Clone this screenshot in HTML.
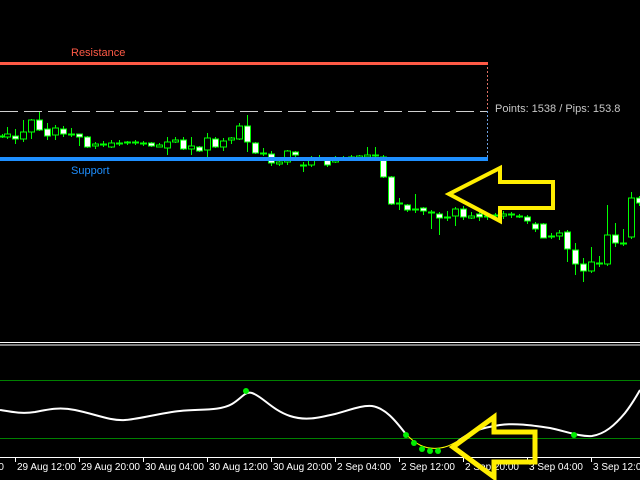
<!DOCTYPE html>
<html><head><style>
html,body{margin:0;padding:0;background:#000;width:640px;height:480px;overflow:hidden}
svg{display:block}
text{font-family:"Liberation Sans",sans-serif}
</style></head><body>
<svg width="640" height="480" viewBox="0 0 640 480" xmlns="http://www.w3.org/2000/svg">
<rect width="640" height="480" fill="#000"/>
<line x1="0" y1="111.5" x2="487" y2="111.5" stroke="#d0d0d0" stroke-width="1" stroke-dasharray="18,6"/>
<line x1="487.5" y1="63" x2="487.5" y2="111" stroke="#e07060" stroke-width="1" stroke-dasharray="2,2"/>
<line x1="487.5" y1="111" x2="487.5" y2="159" stroke="#6aa0e0" stroke-width="1" stroke-dasharray="2,2"/>
<g id="candles" stroke="#00ff00" stroke-width="1"></g>
<line x1="0" y1="63.5" x2="488" y2="63.5" stroke="#ff5a46" stroke-width="3"/>
<line x1="0" y1="159" x2="488" y2="159" stroke="#1e8fff" stroke-width="4"/>
<text x="71" y="56" font-size="11" fill="#ff5a46">Resistance</text>
<text x="71" y="174" font-size="11" fill="#1e8fff">Support</text>
<text x="495" y="112" font-size="11" fill="#c8c8c8">Points: 1538 / Pips: 153.8</text>
<path d="M449,194 L500,168 L500,182 L553,182 L553,208 L500,208 L500,221 Z" fill="none" stroke="#ffee00" stroke-width="4" stroke-linejoin="miter"/>
<line x1="0" y1="342.5" x2="640" y2="342.5" stroke="#fff" stroke-width="1"/>
<line x1="0" y1="345" x2="640" y2="345" stroke="#fff" stroke-width="1"/>
<line x1="0" y1="380.5" x2="640" y2="380.5" stroke="#008000" stroke-width="1"/>
<line x1="0" y1="438.5" x2="640" y2="438.5" stroke="#008000" stroke-width="1"/>
<path d="M0,410 C12,412 22,414 35,412 C50,409 60,407 75,410 C95,414 110,421 125,420 C140,419 160,413 180,411 C200,409 220,411 232,404 C242,398 245,391 252,393 C262,396 272,410 290,416 C305,421 318,418 335,414 C350,410 362,405 372,406 C385,408 395,420 405,433" fill="none" stroke="#fff" stroke-width="2"/>
<path d="M405,433 C415,444 425,450 440,448 C448,447 452,444 458,441" fill="none" stroke="#ffff00" stroke-width="1"/>
<path d="M458,441 C470,432 480,428 500,425 C515,423 530,425 550,428 C565,431 580,437 592,436 C605,434 615,425 625,413 C632,404 636,397 640,390" fill="none" stroke="#fff" stroke-width="2"/>
<g fill="#00ee00">
<circle cx="246" cy="391" r="3"/><circle cx="406" cy="435" r="3"/><circle cx="414" cy="443" r="3"/><circle cx="422" cy="449" r="3"/><circle cx="430" cy="451" r="3"/><circle cx="438" cy="451" r="3"/><circle cx="574" cy="435" r="3"/>
</g>
<line x1="0" y1="457.5" x2="640" y2="457.5" stroke="#fff" stroke-width="1"/>
<g stroke="#fff" stroke-width="1">
<line x1="15.5" y1="457" x2="15.5" y2="462"/><line x1="79.5" y1="457" x2="79.5" y2="462"/><line x1="143.5" y1="457" x2="143.5" y2="462"/><line x1="207.5" y1="457" x2="207.5" y2="462"/><line x1="271.5" y1="457" x2="271.5" y2="462"/><line x1="335.5" y1="457" x2="335.5" y2="462"/><line x1="399.5" y1="457" x2="399.5" y2="462"/><line x1="463.5" y1="457" x2="463.5" y2="462"/><line x1="527.5" y1="457" x2="527.5" y2="462"/><line x1="591.5" y1="457" x2="591.5" y2="462"/>
</g>
<g font-size="10" fill="#fff">
<text x="-10" y="470">:00</text>
<text x="17" y="470">29 Aug 12:00</text>
<text x="81" y="470">29 Aug 20:00</text>
<text x="145" y="470">30 Aug 04:00</text>
<text x="209" y="470">30 Aug 12:00</text>
<text x="273" y="470">30 Aug 20:00</text>
<text x="337" y="470">2 Sep 04:00</text>
<text x="401" y="470">2 Sep 12:00</text>
<text x="465" y="470">2 Sep 20:00</text>
<text x="529" y="470">3 Sep 04:00</text>
<text x="593" y="470">3 Sep 12:00</text>
</g>
<path d="M453,447 L494,417 L494,432 L535,432 L535,462 L494,462 L494,477 Z" fill="none" stroke="#ffee00" stroke-width="5"/>
</svg>
<script>
var d=[[2,136,136,134,138,0],[7,134,137,127,139,0],[15,136,139,129,144,1],[23,132,139,120,142,0],[31,120,132,119,139,0],[39,120,130,112,131,1],[47,129,136,123,140,1],[55,128,135,125,140,0],[63,129,134,126,137,1],[71,134,135,128,137,0],[79,134,137,134,146,1],[87,137,147,136,148,1],[95,144,146,142,149,0],[103,144,145,141,147,0],[111,143,147,140,148,0],[119,143,144,140,146,0],[127,142,143,141,145,0],[135,142,143,140,145,0],[143,143,144,141,146,0],[151,143,146,142,147,1],[159,145,147,143,147,0],[167,142,148,137,155,0],[175,140,142,137,143,0],[183,140,149,137,150,1],[191,146,149,137,155,0],[199,147,151,146,152,1],[207,138,150,133,158,0],[215,139,147,137,148,1],[223,141,147,138,151,0],[231,138,140,137,144,0],[239,126,139,123,140,0],[247,126,142,115,152,1],[255,143,153,142,154,1],[263,153,154,148,156,0],[271,154,163,151,166,1],[279,162,164,159,166,0],[287,151,162,150,165,0],[295,152,155,151,157,1],[303,165,166,162,172,0],[311,158,165,156,167,0],[319,158,159,155,160,0],[327,160,165,158,167,1],[335,159,162,156,163,0],[343,158,159,156,160,0],[351,157,158,155,159,0],[359,156,158,155,159,0],[367,155,157,147,158,0],[375,155,156,147,157,0],[383,157,177,155,178,1],[391,177,204,176,205,1],[399,203,204,198,210,0],[407,205,210,204,212,1],[415,209,210,194,213,0],[423,208,211,207,215,1],[431,212,213,210,229,0],[439,214,218,212,235,1],[447,217,218,211,221,0],[455,209,216,207,226,0],[463,209,217,206,220,1],[471,216,218,212,219,0],[479,214,217,212,221,1],[487,216,217,213,220,0],[495,215,216,213,220,0],[503,214,216,211,219,0],[511,214,215,212,218,0],[519,216,217,214,218,0],[527,217,221,215,224,1],[535,224,229,222,232,1],[543,224,238,223,238,1],[551,236,237,233,239,0],[559,233,236,230,240,0],[567,232,249,230,262,1],[575,250,264,243,275,1],[583,264,271,258,282,1],[591,262,271,247,273,0],[599,263,264,256,267,0],[607,235,264,205,266,0],[615,235,243,223,247,1],[623,243,244,229,246,0],[631,198,237,192,239,0],[639,198,203,196,206,1]];
var s='';d.forEach(function(c){var x=c[0]+0.5;s+='<line x1="'+x+'" y1="'+c[3]+'" x2="'+x+'" y2="'+c[4]+'"/>';var h=Math.max(c[2]-c[1],1);s+='<rect x="'+(c[0]-2.5)+'" y="'+c[1]+'" width="6" height="'+h+'" fill="'+(c[5]?'#fff':'#000')+'"/>';});
document.getElementById('candles').innerHTML=s;
</script>
</body></html>
